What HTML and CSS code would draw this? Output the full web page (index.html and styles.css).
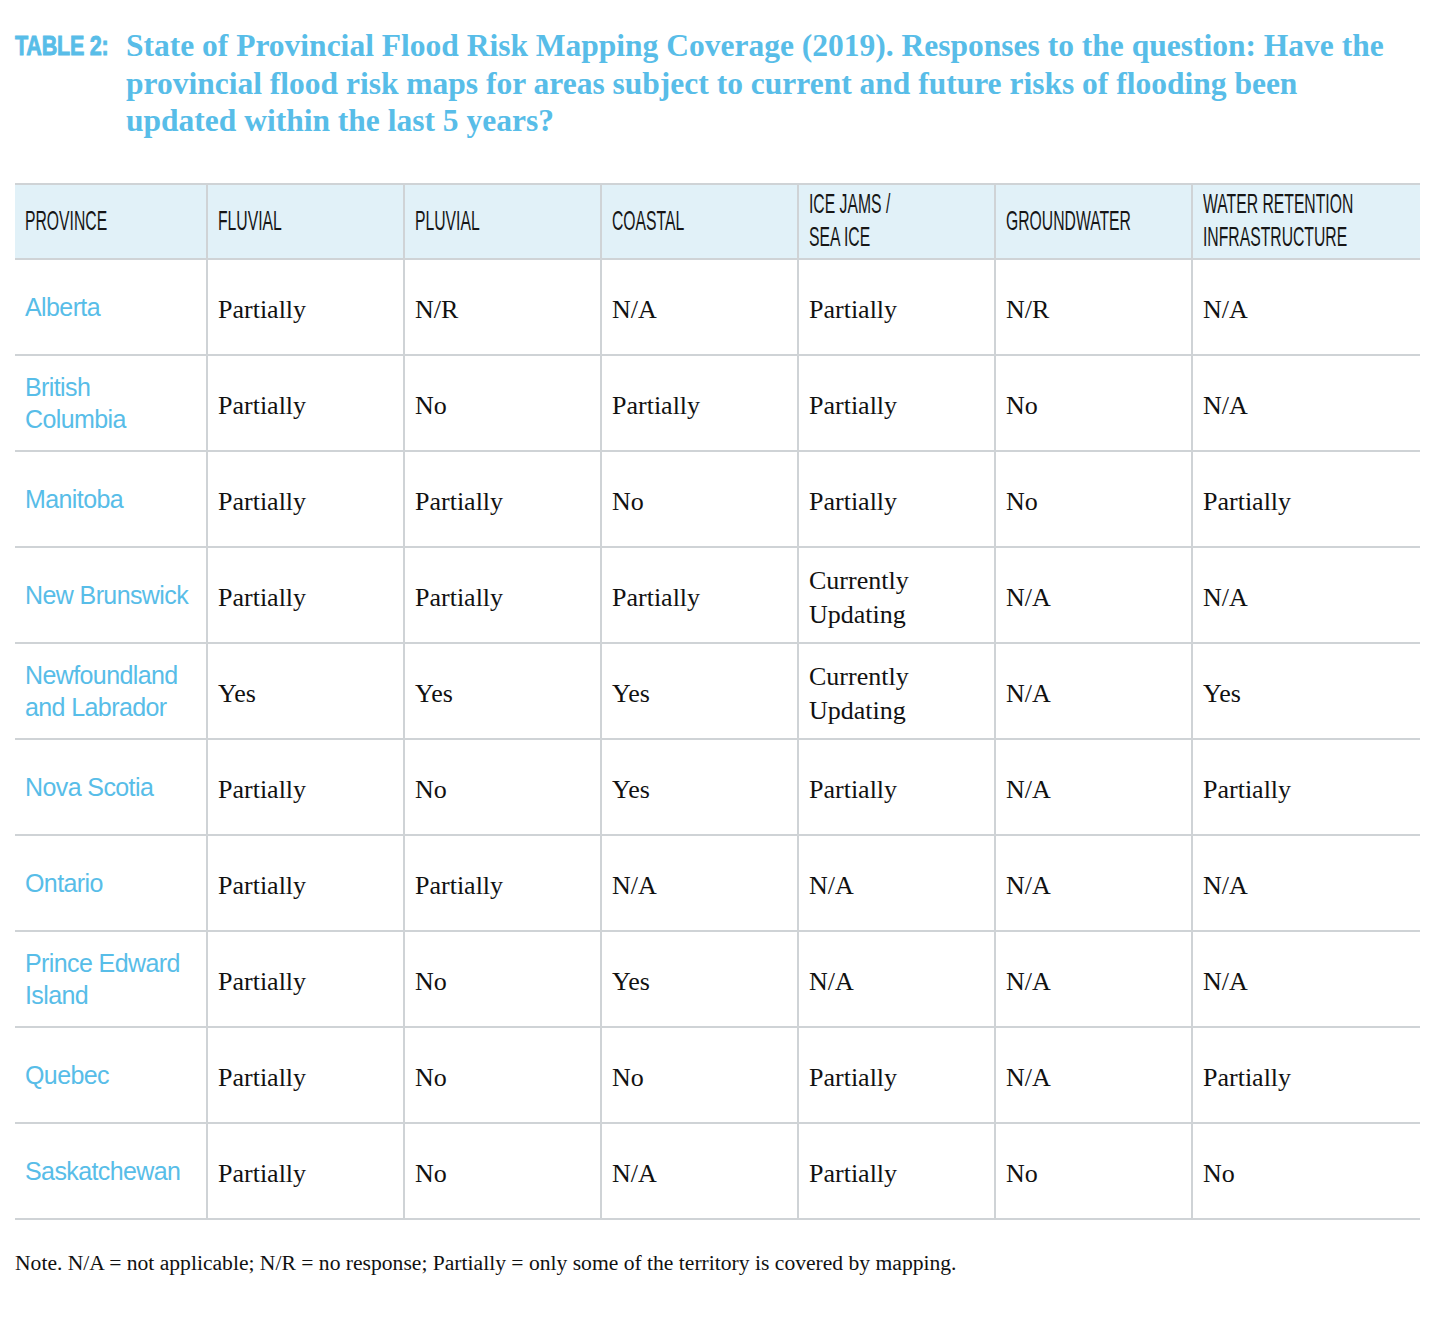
FILE: index.html
```html
<!DOCTYPE html>
<html lang="en">
<head>
<meta charset="utf-8">
<title>Table 2</title>
<link rel="stylesheet" href="styles.css">
</head>
<body>
<div class="page">
  <div class="title">
    <div class="label-box"><span class="label">TABLE 2:</span></div>
    <h1 class="heading">State of Provincial Flood Risk Mapping Coverage (2019). Responses to the question: Have the provincial flood risk maps for areas subject to current and future risks of flooding been updated within the last 5 years?</h1>
  </div>
  <table class="data">
    <colgroup>
      <col class="c-prov"><col class="c-std"><col class="c-std"><col class="c-std"><col class="c-std"><col class="c-std"><col class="c-last">
    </colgroup>
    <thead>
      <tr>
        <th><span class="hd">PROVINCE</span></th>
        <th><span class="hd">FLUVIAL</span></th>
        <th><span class="hd">PLUVIAL</span></th>
        <th><span class="hd">COASTAL</span></th>
        <th><span class="hd">ICE JAMS /<br>SEA ICE</span></th>
        <th><span class="hd">GROUNDWATER</span></th>
        <th><span class="hd">WATER RETENTION<br>INFRASTRUCTURE</span></th>
      </tr>
    </thead>
    <tbody>
      <tr><td class="prov">Alberta</td><td>Partially</td><td>N/R</td><td>N/A</td><td>Partially</td><td>N/R</td><td>N/A</td></tr>
      <tr><td class="prov">British<br>Columbia</td><td>Partially</td><td>No</td><td>Partially</td><td>Partially</td><td>No</td><td>N/A</td></tr>
      <tr><td class="prov">Manitoba</td><td>Partially</td><td>Partially</td><td>No</td><td>Partially</td><td>No</td><td>Partially</td></tr>
      <tr><td class="prov">New Brunswick</td><td>Partially</td><td>Partially</td><td>Partially</td><td>Currently<br>Updating</td><td>N/A</td><td>N/A</td></tr>
      <tr><td class="prov">Newfoundland<br>and Labrador</td><td>Yes</td><td>Yes</td><td>Yes</td><td>Currently<br>Updating</td><td>N/A</td><td>Yes</td></tr>
      <tr><td class="prov">Nova Scotia</td><td>Partially</td><td>No</td><td>Yes</td><td>Partially</td><td>N/A</td><td>Partially</td></tr>
      <tr><td class="prov">Ontario</td><td>Partially</td><td>Partially</td><td>N/A</td><td>N/A</td><td>N/A</td><td>N/A</td></tr>
      <tr><td class="prov">Prince Edward<br>Island</td><td>Partially</td><td>No</td><td>Yes</td><td>N/A</td><td>N/A</td><td>N/A</td></tr>
      <tr><td class="prov">Quebec</td><td>Partially</td><td>No</td><td>No</td><td>Partially</td><td>N/A</td><td>Partially</td></tr>
      <tr><td class="prov">Saskatchewan</td><td>Partially</td><td>No</td><td>N/A</td><td>Partially</td><td>No</td><td>No</td></tr>
    </tbody>
  </table>
  <p class="note">Note. N/A = not applicable; N/R = no response; Partially = only some of the territory is covered by mapping.</p>
</div>
</body>
</html>
```

FILE: styles.css
```css
html, body {
  margin: 0;
  padding: 0;
  background: #ffffff;
}

.page {
  padding: 27px 14px 0 15px;
  color: #111111;
  font-family: "Liberation Serif", "Times New Roman", serif;
}

.title {
  display: flex;
  align-items: flex-start;
  color: #58bde8;
}

.label-box {
  flex: 0 0 111px;
  width: 111px;
  min-width: 0;
  height: 38px;
  overflow: visible;
}

.label {
  display: inline-block;
  white-space: nowrap;
  font-family: "Liberation Sans", Arial, sans-serif;
  font-weight: 700;
  font-size: 28px;
  line-height: 38px;
  letter-spacing: -0.3px;
  -webkit-text-stroke: 0.9px #58bde8;
  transform: scaleX(0.77);
  transform-origin: left center;
}

.heading {
  margin: 0;
  max-width: 1275px;
  font-family: "Liberation Serif", "Times New Roman", serif;
  font-weight: 700;
  font-size: 31.5px;
  line-height: 37.5px;
}

.data {
  margin-top: 43px;
  width: 1405px;
  border-collapse: collapse;
  table-layout: fixed;
}

.c-prov { width: 192px; }
.c-std { width: 197px; }
.c-last { width: 228px; }

.data th,
.data td {
  border: 2px solid #cfd3d6;
  text-align: left;
  vertical-align: middle;
  padding: 0 10px;
}

.data tr > :first-child { border-left: none; }
.data tr > :last-child { border-right: none; }

.data th {
  height: 73px;
  background: #e1f1f8;
  font-weight: 400;
}

.hd {
  display: inline-block;
  white-space: nowrap;
  font-family: "Liberation Sans", Arial, sans-serif;
  font-size: 22px;
  line-height: 26px;
  color: #161616;
  transform: scale(0.715, 1.27);
  transform-origin: left center;
}

.data td {
  height: 88px;
  font-size: 26px;
  line-height: 34px;
  padding-top: 6px;
}

.data td.prov {
  font-family: "Liberation Sans", Arial, sans-serif;
  font-size: 25px;
  line-height: 32px;
  letter-spacing: -0.6px;
  color: #58bde8;
  padding-top: 0;
}

.note {
  margin: 30px 0 0 0;
  font-size: 21.6px;
  line-height: 26px;
  color: #111111;
}
```
